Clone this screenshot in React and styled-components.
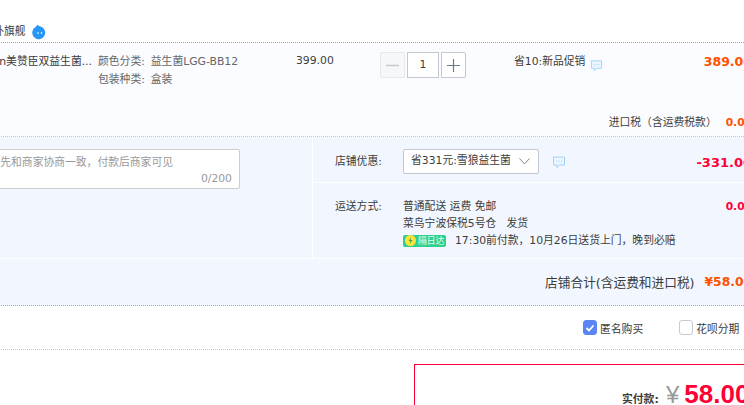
import React from "react";
import styled, { createGlobalStyle } from "styled-components";

const GlobalStyle = createGlobalStyle`
  html, body {
    margin: 0;
    padding: 0;
    background: #fff;
  }
  body {
    font-family: "DejaVu Sans", "Noto Sans CJK SC", sans-serif;
    font-size: 10.8px;
    color: #3c3c3c;
  }
`;

const Viewport = styled.div`
  width: 744px;
  height: 405px;
  overflow: hidden;
`;

// the order form is wider than the window and cut on both sides
const Order = styled.div`
  width: 852px;
  margin-left: -100px;
`;

const ShopRow = styled.div`
  height: 43px;
  box-sizing: border-box;
  padding: 22px 0 0 50px;
  display: flex;
  align-items: center;
  gap: 6px;
  line-height: 18px;
  border-bottom: 1px dotted #80a8e8;
`;

const ItemRow = styled.div`
  height: 94px;
  box-sizing: border-box;
  background: #fbfcff;
  border-bottom: 1px dotted #c8c8c8;
  position: relative;
  display: grid;
  grid-template-columns: 198px 198px 84px 134px auto 1fr;
  padding-top: 9px;
  line-height: 18px;
`;

const Title = styled.div`
  color: #3c3c3c;
  text-align: right;
  padding: 1px 6px 0 0;
  white-space: nowrap;
`;

const Sku = styled.div`
  color: #666;
  white-space: nowrap;
  padding-top: 1px;
`;

const SkuLine = styled.div`
  display: flex;
  gap: 6px;
`;

const Price = styled.div`
  color: #3c3c3c;
`;

const Stepper = styled.div`
  display: flex;
  gap: 2px;
  height: 26px;
`;

const StepButton = styled.div`
  width: 25px;
  box-sizing: border-box;
  border: 1px solid ${(p) => (p.$disabled ? "#e6e8ec" : "#c4c6d0")};
  border-radius: ${(p) => (p.$disabled ? "2px 0 0 2px" : "0 2px 2px 0")};
  background: ${(p) => (p.$disabled ? "#f6f7f9" : "#fff")};
  display: flex;
  align-items: center;
  justify-content: center;
`;

const StepValue = styled.div`
  width: 32px;
  box-sizing: border-box;
  border: 1px solid #c4c6d0;
  background: #fff;
  display: flex;
  align-items: center;
  justify-content: center;
`;

const Promo = styled.div`
  display: flex;
  gap: 5px;
  white-space: nowrap;
  padding-top: 1px;
`;

const PromoIcon = styled.span`
  display: block;
  margin-top: 6px;
`;

const Amount = styled.div`
  font-weight: 700;
  font-size: ${(p) => p.$size || 12.5}px;
  color: ${(p) => p.$color || "#ff5000"};
  text-align: right;
  white-space: nowrap;
  padding-top: ${(p) => p.$top || 0}px;
`;

const TaxLine = styled.div`
  position: absolute;
  right: 0;
  top: 71px;
  display: flex;
  gap: 9px;
  align-items: center;
  line-height: 18px;
`;

const ExtraRow = styled.div`
  background: #f2f7ff;
  display: flex;
  height: 122px;
  border-bottom: 1px solid #fff;
  box-sizing: border-box;
`;

const NoteCol = styled.div`
  width: 413px;
  box-sizing: border-box;
  padding-top: 12px;
  border-right: 1px solid #fff;
`;

const NoteBox = styled.div`
  width: 340px;
  height: 40px;
  box-sizing: border-box;
  background: #fff;
  border: 1px solid #ccc;
  border-radius: 2px;
  display: flex;
  flex-direction: column;
  padding: 0 7px 0 0;
  color: #999;
  line-height: 16px;
`;

const Placeholder = styled.div`
  text-align: right;
  padding: 5px 59px 0 0;
  white-space: nowrap;
`;

const Counter = styled.div`
  text-align: right;
`;

const FeeCol = styled.div`
  flex: 1;
  display: flex;
  flex-direction: column;
`;

const FeeRow = styled.div`
  display: grid;
  grid-template-columns: 68px 1fr auto;
  padding-left: 22px;
  height: ${(p) => p.$height}px;
  box-sizing: border-box;
  border-bottom: ${(p) => (p.$divided ? "1px solid #fff" : "none")};
  align-items: start;
  line-height: 18px;
`;

const FeeLabel = styled.div`
  padding-top: ${(p) => p.$top}px;
  color: #3c3c3c;
`;

const SelectWrap = styled.div`
  display: flex;
  align-items: center;
  gap: 13px;
  padding-top: 12px;
`;

const Select = styled.div`
  width: 136px;
  height: 25px;
  box-sizing: border-box;
  border: 1px solid #c4c6d0;
  border-radius: 2px;
  background: #fff;
  padding: 0 8px 1px 7px;
  display: flex;
  align-items: center;
  justify-content: space-between;
  white-space: nowrap;
`;

const Shipping = styled.div`
  padding-top: 15px;
  line-height: 17px;
  color: #3c3c3c;
`;

const ShipLine = styled.div`
  display: flex;
  align-items: center;
  gap: ${(p) => p.$gap || 0}px;
  white-space: pre;
`;

const FastBadge = styled.span`
  width: 43px;
  height: 12px;
  background: #2fd08e;
  border-radius: 2px;
  color: #e8fff4;
  font-size: 8.8px;
  line-height: 12px;
  display: flex;
  align-items: center;
  gap: 2px;
  padding-left: 2px;
  box-sizing: border-box;
`;

const TotalRow = styled.div`
  height: 47px;
  box-sizing: border-box;
  background: #f2f7ff;
  border-bottom: 1px dotted #80a8d0;
  display: flex;
  justify-content: flex-end;
  align-items: center;
  gap: 10px;
  padding-bottom: 1px;
  font-size: 12.7px;
  color: #3c3c3c;
`;

const OptionRow = styled.div`
  height: 44px;
  box-sizing: border-box;
  border-bottom: 1px dotted #c8c8c8;
  display: flex;
  align-items: center;
  padding: 0 0 0 683px;
  gap: 36px;
`;

const Option = styled.label`
  display: flex;
  align-items: center;
  gap: 3px;
  white-space: nowrap;
`;

const CheckBox = styled.span`
  width: 14px;
  height: 15px;
  box-sizing: border-box;
  border-radius: 3px;
  border: 1px solid ${(p) => (p.$checked ? "#5a86f5" : "#c8c8d2")};
  background: ${(p) => (p.$checked ? "#5a86f5" : "#fff")};
  display: flex;
  align-items: center;
  justify-content: center;
`;

const PayWrap = styled.div`
  display: flex;
  justify-content: flex-end;
  padding-top: 14px;
`;

const PayBox = styled.div`
  width: 338px;
  height: 80px;
  box-sizing: border-box;
  border: 1px solid #ff0036;
  border-right: none;
  padding: 14px 0 0 207px;
  display: flex;
  align-items: baseline;
  white-space: nowrap;
`;

const PayLabel = styled.span`
  font-weight: 700;
  color: #3c3c3c;
  width: 44px;
`;

const Yen = styled.span`
  font-family: "Liberation Sans", sans-serif;
  font-size: 24px;
  color: #999;
  margin-right: 5px;
`;

const Total = styled.span`
  font-family: "Liberation Sans", sans-serif;
  font-size: 26px;
  font-weight: 700;
  color: #ff0036;
`;

const ChatIcon = ({ size = 14 }) => (
  <svg width={size} height={size} viewBox="0 0 14 14" fill="none">
    <path
      d="M1.5 2h11v8H7.5l-2.5 2.5V10H1.5z"
      fill="#eaf5ff"
      stroke="#9fd2f5"
      strokeWidth="1"
    />
    <path d="M4 6h1M6.5 6h1M9 6h1" stroke="#9fd2f5" strokeWidth="1" />
  </svg>
);

const WangWang = () => (
  <svg width="15" height="16" viewBox="0 0 15 16">
    <path
      d="M5.5 0.5c.5 1 1.6 1.6 3.2 2A6.5 6.5 0 1 1 2 4.2C3.4 3.4 5 2 5.5 0.5z"
      fill="#2896f5"
    />
    <path d="M6 8v2M9.5 8v2" stroke="#cfe8ff" strokeWidth="1.2" />
  </svg>
);

const BoltIcon = () => (
  <svg width="11" height="11" viewBox="0 0 11 11">
    <circle cx="5.5" cy="5.5" r="5.5" fill="#ffe23a" />
    <path d="M6.3 1.8L3.6 6h1.9l-.8 3.2L7.5 5H5.6z" fill="#2fa868" />
  </svg>
);

function App() {
  return (
    <Viewport>
      <GlobalStyle />
      <Order>
        <ShopRow>
          <span>美赞臣海外旗舰</span>
          <WangWang />
        </ShopRow>
        <ItemRow>
          <Title>Mead Johnson美赞臣双益生菌...</Title>
          <Sku>
            <SkuLine>
              <span>颜色分类:</span>
              <span>益生菌LGG-BB12</span>
            </SkuLine>
            <SkuLine>
              <span>包装种类:</span>
              <span>盒装</span>
            </SkuLine>
          </Sku>
          <Price>399.00</Price>
          <Stepper>
            <StepButton $disabled>
              <svg width="13" height="13" viewBox="0 0 13 13">
                <path d="M0 6.5h13" stroke="#c8c8c8" strokeWidth="1.4" />
              </svg>
            </StepButton>
            <StepValue>1</StepValue>
            <StepButton>
              <svg width="13" height="13" viewBox="0 0 13 13">
                <path d="M0 6.5h13M6.5 0v13" stroke="#6d7a88" strokeWidth="1.2" />
              </svg>
            </StepButton>
          </Stepper>
          <Promo>
            <span>省10:新品促销</span>
            <PromoIcon>
              <ChatIcon size={13} />
            </PromoIcon>
          </Promo>
          <Amount $top={1}>389.00</Amount>
          <TaxLine>
            <span>进口税（含运费税款）</span>
            <Amount $size={10.67}>0.00</Amount>
          </TaxLine>
        </ItemRow>
        <ExtraRow>
          <NoteCol>
            <NoteBox>
              <Placeholder>选填，建议先和商家协商一致，付款后商家可见</Placeholder>
              <Counter>0/200</Counter>
            </NoteBox>
          </NoteCol>
          <FeeCol>
            <FeeRow $height={46} $divided>
              <FeeLabel $top={16}>店铺优惠:</FeeLabel>
              <SelectWrap>
                <Select>
                  <span>省331元:雪狼益生菌</span>
                  <svg width="11" height="7" viewBox="0 0 11 7" fill="none">
                    <path d="M.5.5l5 5.5 5-5.5" stroke="#888" strokeWidth="1" />
                  </svg>
                </Select>
                <ChatIcon />
              </SelectWrap>
              <Amount $size={13} $color="#ff0036" $top={17}>
                -331.00
              </Amount>
            </FeeRow>
            <FeeRow $height={75}>
              <FeeLabel $top={15}>运送方式:</FeeLabel>
              <Shipping>
                <ShipLine>普通配送 运费 免邮</ShipLine>
                <ShipLine>菜鸟宁波保税5号仓   发货</ShipLine>
                <ShipLine $gap={9}>
                  <FastBadge>
                    <BoltIcon />
                    隔日达
                  </FastBadge>
                  <span>17:30前付款，10月26日送货上门，晚到必赔</span>
                </ShipLine>
              </Shipping>
              <Amount $size={10.67} $color="#ff0036" $top={15}>
                0.00
              </Amount>
            </FeeRow>
          </FeeCol>
        </ExtraRow>
        <TotalRow>
          <span>店铺合计(含运费和进口税)</span>
          <Amount $size={12.3}>¥58.00</Amount>
        </TotalRow>
        <OptionRow>
          <Option>
            <CheckBox $checked>
              <svg width="10" height="10" viewBox="0 0 10 10" fill="none">
                <path d="M1.5 5l2.5 2.5L8.5 2.5" stroke="#fff" strokeWidth="1.8" />
              </svg>
            </CheckBox>
            匿名购买
          </Option>
          <Option>
            <CheckBox />
            花呗分期
          </Option>
        </OptionRow>
        <PayWrap>
          <PayBox>
            <PayLabel>实付款:</PayLabel>
            <Yen>¥</Yen>
            <Total>58.00</Total>
          </PayBox>
        </PayWrap>
      </Order>
    </Viewport>
  );
}

export default App;
